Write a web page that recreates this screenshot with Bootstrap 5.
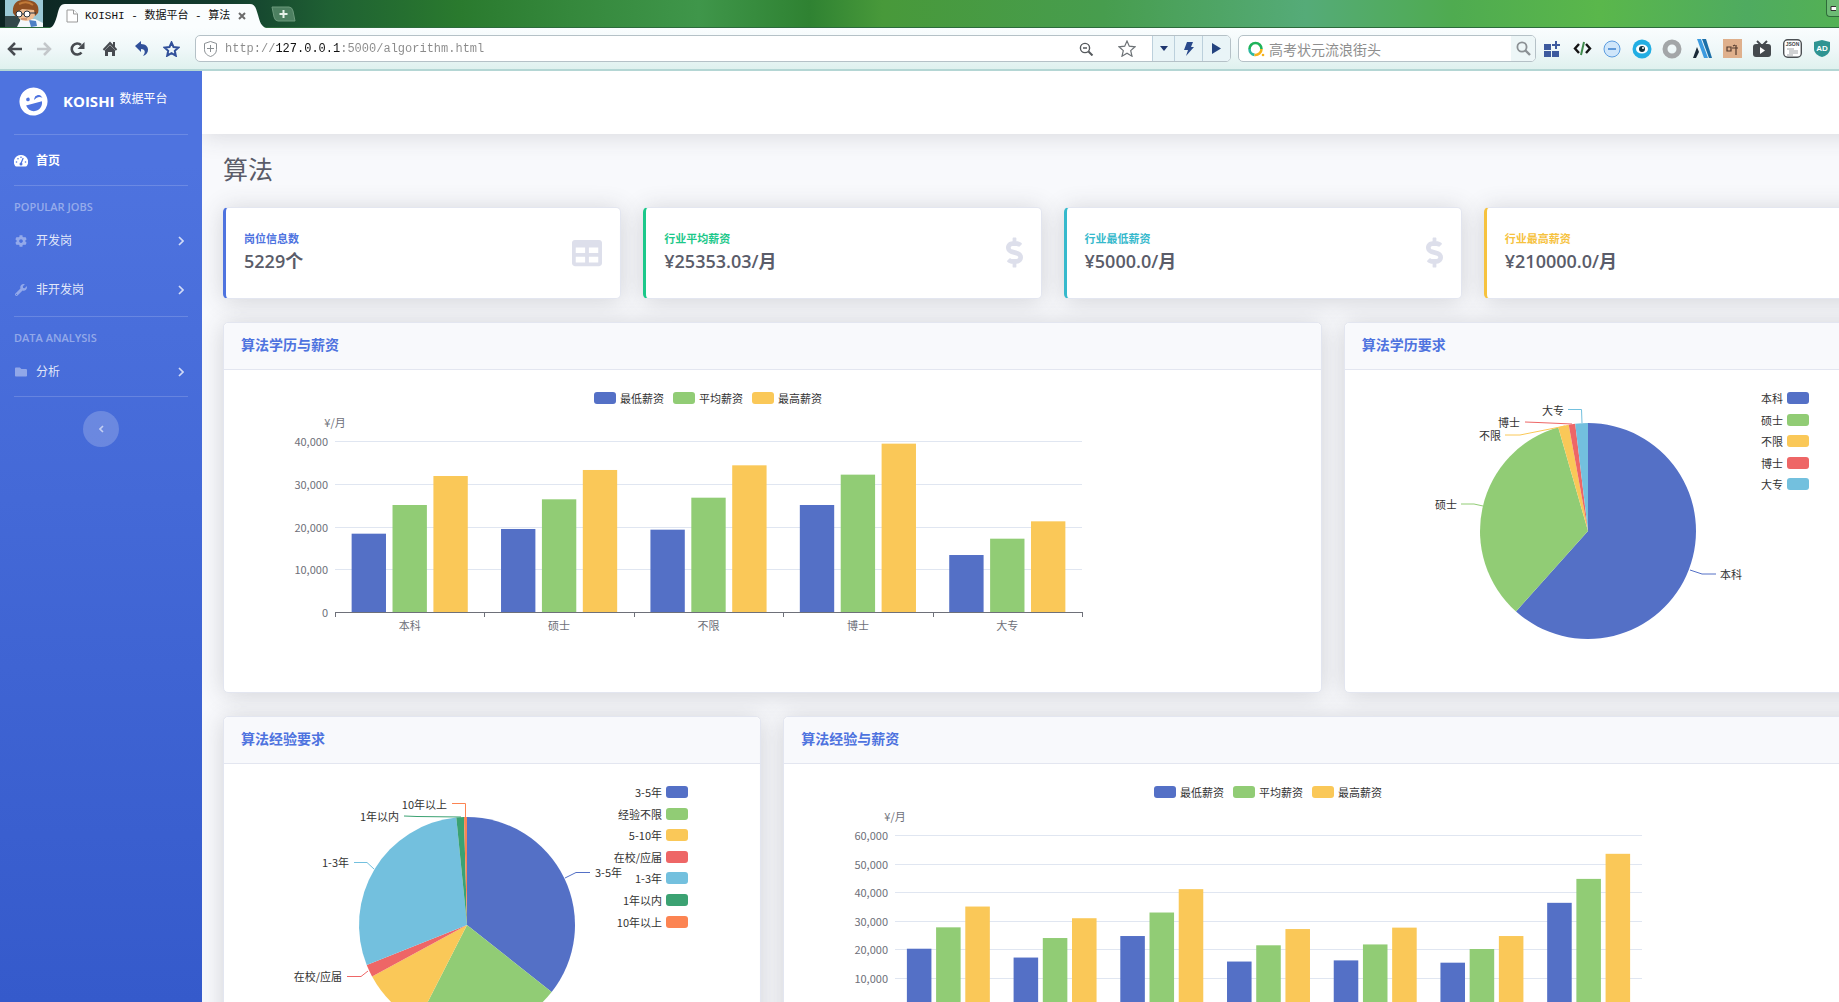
<!DOCTYPE html>
<html lang="zh-CN">
<head>
<meta charset="utf-8">
<meta name="viewport" content="width=device-width, initial-scale=1">
<title>KOISHI - 数据平台 - 算法</title>
<link href="https://cdn.jsdelivr.net/npm/bootstrap@5.3.0/dist/css/bootstrap.min.css" rel="stylesheet">
<style>
:root{--ink:#5a5c69;--brand:#4e73df}
html,body{height:100%}
body{font-family:"Open Sans","Noto Sans CJK SC",sans-serif;font-size:12px;line-height:20px;color:var(--ink);overflow:hidden;display:flex;flex-direction:column;background:#f8f9fc}
svg{display:block;flex:none}
button{border:0;background:none;padding:0}

/* browser frame */
.tabstrip{height:28px;flex:none;border-bottom:1px solid #2c6b3c;background:linear-gradient(90deg,#0c2322 0,#123c2e 12%,#1f6133 18%,#2a7a2e 25%,#35883c 31%,#3f964a 38%,#2f8232 44%,#48993a 48%,#479d4e 60%,#55ab78 71%,#4fab50 79%,#5ab74b 87%,#4fab60 95%,#53b154 100%)}
.avatar{width:38px;margin-left:5px}
.tab-wrap{position:relative;width:216px;height:28px;margin-left:7px}
.tab-wrap .tab-shape{position:absolute;inset:0}
.tab-line{position:relative;height:28px;padding:4px 20px 0 16px;gap:7px;color:#111;font:11px/20px "Liberation Mono","Noto Sans CJK SC",monospace}
.tabstrip .min-btn{width:13px;height:17px;border:1px solid #2f6b3a;border-width:0 0 1px 1px;border-radius:0 0 0 4px;background:#6dbb74}
.toolbar{height:43px;flex:none;background:linear-gradient(#fafdfe,#eef7f8 55%,#dff1ee);border-bottom:2px solid #b4d6d4}
.tb-btn{height:28px;display:flex;align-items:center;justify-content:center;color:#474b50}
.w-a .tb-btn{width:29px}.w-b .tb-btn{width:33px}.w-c .tb-btn,.w-ext .tb-btn{width:30px}
.w-b{margin-left:2px}.w-ext{margin-left:1px;margin-right:2px}
.addr,.find{height:27px;border:1px solid #b5c1c7;border-radius:5px;background:#fff;overflow:hidden}
.addr{margin-left:9px}
.addr input,.find input{border:0;outline:0;background:none;min-width:0;padding:0}
.addr input{font:12px/24px "Liberation Mono",monospace;color:transparent;background:linear-gradient(90deg,#8a8a8a 7ch,#111 7ch,#111 16ch,#8a8a8a 16ch);background-clip:text;-webkit-background-clip:text}
.addr .seg{width:28px;height:26px;border-left:1px solid #bcd0dc;background:#e9f4f7}
.addr .seg.narrow{width:22px}
.find{width:298px;margin-left:7px;padding-left:8px}
.find input{font-family:"Noto Sans CJK SC",sans-serif;font-size:14px}
.find input::placeholder{color:#8e8e8e;opacity:1}
.find .tb-btn{width:24px;background:#edf6f7}

/* dashboard */
.side{width:202px;flex:none;background:linear-gradient(180deg,#4e73df 10%,#355acb 100%);color:#fff}
.side .brand-row{height:63px;padding:0 19px;gap:15px;color:#fff;font-size:15px;font-weight:700;text-decoration:none}
.side .brand-row span{padding-bottom:3px}
.side .brand-row svg{margin-bottom:2px}
.side .brand-row sup{font-size:12px;font-weight:400;top:-4px;margin-left:1px}
.side .rule{height:1px;margin:0 14px;background:rgba(255,255,255,.17)}
.side .rule-gap{margin-top:2px}
.side .side-head{padding:13px 14px 1px;font-size:11px;line-height:16px;font-weight:600;color:rgba(255,255,255,.42)}
.side .item{height:49px;padding:1px 18px 0 14px;gap:8px;color:rgba(255,255,255,.85);text-decoration:none}
.side .item svg:first-child{opacity:.4}
.side .item.now{height:50px;color:#fff;font-weight:700}
.side .item.now svg:first-child{opacity:1}
.side .item svg:last-child:not(:first-child){margin-left:auto}
.side .fold{width:36px;height:36px;margin:14px auto;border-radius:50%;background:rgba(255,255,255,.2);color:rgba(255,255,255,.6)}
.main{min-width:0;overflow:hidden}
.wide{width:calc(100% + 65px)}
.topbar{height:63px;background:#fff;position:relative;box-shadow:0 2px 25px rgba(58,59,69,.17)}
.page{padding:20px 22px 0 21px}
.page h1{font-size:25px;line-height:30px;font-weight:400;margin-bottom:23px}
.page .row{--bs-gutter-x:22px}
.panel{background:#fff;border:1px solid #e3e6f0;border-radius:5px;box-shadow:0 2px 25px rgba(58,59,69,.2);margin-bottom:23px}
.stat{height:92px;padding:0 18px 1px 18px;border-left:3px solid var(--c)}
.stat .lab{font-size:11px;line-height:14px;font-weight:700;color:var(--c);margin-bottom:4px}
.stat .num{font-size:18px;line-height:23px;font-weight:600}
.stat svg{fill:#dddfeb}
.panel .head{height:47px;padding:0 17px 2px;background:#f8f9fc;border-bottom:1px solid #e3e6f0;border-radius:5px 5px 0 0}
.panel h2{font-size:14px;font-weight:700;color:var(--brand);margin:0}
.panel .plot{height:322px;padding:17px 18px;overflow:hidden}
.plot text{font-family:"Noto Sans CJK SC",sans-serif;font-size:11px;fill:#333;dominant-baseline:central}
.plot .axis text{fill:#6e7079}
</style>
<script src="https://cdn.jsdelivr.net/npm/bootstrap@5.3.0/dist/js/bootstrap.bundle.min.js"></script>
</head>
<body>
<header class="flex-shrink-0">
  <div class="tabstrip d-flex">
    <svg class="avatar" height="27" viewBox="0 0 38 27"><rect width="38" height="27" fill="#9cc9d6"/><path d="M0 16h15v11H0z" fill="#33484a"/><path d="M12 27l4-8h14l8 4v4z" fill="#f3f7fa"/><path d="M24 20l7 1 1 5-6 1z" fill="#4d7fc4"/><ellipse cx="21" cy="12" rx="10" ry="9" fill="#eebd93"/><path d="M8 13C7 3 13-1 21 0c9 0 14 5 12 13l-3 3-1-6-12-1-5 4-1 4z" fill="#8f4f22"/><path d="M14 4q8-4 14 1" stroke="#c27a38" stroke-width="2" fill="none"/><circle cx="14" cy="14" r="3" fill="#fff" stroke="#29333c"/><circle cx="22" cy="14" r="3" fill="#fff" stroke="#29333c"/><path d="M17 14h2m6-1h6" stroke="#29333c"/><path d="M16 19h6" stroke="#b0694a"/></svg>
    <div class="tab-wrap">
      <svg class="tab-shape" width="216" height="28" viewBox="0 0 216 28"><path d="M0 28c4-2 5-6 7-12 2-8 3-12 8-12h185c5 0 6 4 8 11 2 7 3 11 8 13z" fill="#fafdfe"/></svg>
      <div class="tab-line d-flex align-items-center">
        <svg width="12" height="14" viewBox="0 0 12 14" fill="#fff" stroke="#999"><path d="M1 1h6.500l4 4v8H1z"/><path d="M7.500 1v4h4"/></svg>
        <span>KOISHI - 数据平台 - 算法</span>
        <button class="ms-auto" aria-label="关闭标签"><svg width="8" height="8" viewBox="0 0 8 8" stroke="#6b6b6b" stroke-width="2"><path d="M1 1l6 6M7 1L1 7"/></svg></button>
      </div>
    </div>
    <button class="ms-1" aria-label="新标签"><svg width="26" height="16" viewBox="0 0 26 16"><path d="M2 1h17q3 0 4 4l2 10H8q-3 0-4-4z" fill="#4d8061" stroke="#6c9a7c"/><path d="M13.500 4v8M9.500 8h8" stroke="#e6f0e8" stroke-width="2"/></svg></button>
    <button class="min-btn ms-auto d-flex align-items-center" aria-label="最小化"><svg width="9" height="5" viewBox="0 0 9 5"><path d="M4 .5h8v4H4z" fill="#fff" stroke="#333"/></svg></button>
  </div>
  <div class="toolbar d-flex align-items-center">
    <div class="d-flex w-a">
      <button class="tb-btn" aria-label="后退"><svg width="16" height="14" viewBox="0 0 16 14" fill="none" stroke="currentColor" stroke-width="2.500"><path d="M8 1L2 7l6 6M2 7h13"/></svg></button>
      <button class="tb-btn" aria-label="前进"><svg width="16" height="14" viewBox="0 0 16 14" fill="none" stroke="#c3c7ca" stroke-width="2.500"><path d="M8 1l6 6-6 6M14 7H1"/></svg></button>
    </div>
    <div class="d-flex w-b">
      <button class="tb-btn" aria-label="刷新"><svg width="16" height="16" viewBox="0 0 16 16"><path d="M12.500 11.500A5.500 5.500 0 1 1 12 4" fill="none" stroke="currentColor" stroke-width="2.600"/><path d="M15.500 1v7h-7z" fill="currentColor"/></svg></button>
      <button class="tb-btn" aria-label="主页"><svg width="16" height="16" viewBox="0 0 16 16" fill="none" stroke="currentColor" stroke-width="2"><path d="M1.500 9L8 2l6.500 7M12 1v5"/><path d="M3 9l5-5 5 5v6h-3v-4H6v4H3z" fill="currentColor" stroke="none"/></svg></button>
    </div>
    <div class="d-flex w-c">
      <button class="tb-btn" aria-label="撤销"><svg width="15" height="15" viewBox="0 0 15 15"><path d="M1 5l6-5v3c9 0 9 10 2 12 3-4 2-7-2-7v3z" fill="#31509a"/></svg></button>
      <button class="tb-btn" aria-label="收藏夹"><svg width="17" height="16" viewBox="0 0 17 16" fill="none" stroke="#31509a" stroke-width="2"><path d="M8.500 1.500l2 4.500 5 .5-3.700 3.300 1 4.900-4.300-2.500-4.300 2.500 1-4.900L1.500 6.500l5-.5z"/></svg></button>
    </div>
    <div class="addr d-flex align-items-center flex-fill">
      <svg class="ms-2" width="13" height="16" viewBox="0 0 13 16" fill="none" stroke="#8a8f93"><path d="M6.500.5l6 2v6c0 4-3 6-6 7-3-1-6-3-6-7v-6z"/><path d="M6.500 4v7M3 7.500h7"/></svg>
      <input class="flex-fill ms-2" aria-label="地址" value="http://127.0.0.1:5000/algorithm.html">
      <button class="tb-btn me-4" aria-label="缩小"><svg width="15" height="14" viewBox="0 0 15 14" fill="none" stroke="#55595d" stroke-width="1.400"><circle cx="6" cy="6" r="4.600"/><path d="M4 6h4"/><path d="M9.500 9.500l4 4" stroke-width="2"/></svg></button>
      <button class="tb-btn me-3" aria-label="加入收藏"><svg width="18" height="17" viewBox="0 0 18 17" fill="none" stroke="#6d7276" stroke-width="1.200"><path d="M9 1l2.300 5.200 5.700.6-4.300 3.800 1.300 5.600L9 13.300l-5 2.900 1.300-5.600L1 6.800l5.700-.6z"/></svg></button>
      <button class="tb-btn seg narrow" aria-label="历史"><svg width="8" height="5" viewBox="0 0 8 5"><path d="M0 0h8L4 5z" fill="#1f3770"/></svg></button>
      <button class="tb-btn seg" aria-label="极速模式"><svg width="10" height="14" viewBox="0 0 10 14"><path d="M3 0h6L7 5h3L2 14l2-6H0z" fill="#2a4a8c"/></svg></button>
      <button class="tb-btn seg" aria-label="转到"><svg width="9" height="11" viewBox="0 0 9 11"><path d="M0 0l9 5.500L0 11z" fill="#24437f"/></svg></button>
    </div>
    <div class="find d-flex align-items-center">
      <svg width="18" height="16" viewBox="0 0 18 16" fill="none" stroke-width="2.600"><path d="M2.500 8A6 6 0 0 1 14.500 8" stroke="#1fb35a"/><path d="M2.500 8a6 6 0 0 0 5 5.900" stroke="#2bb7a2"/><path d="M14.500 8a6 6 0 0 1-7 5.900" stroke="#f5b21b"/><circle cx="16" cy="14" r="1.300" fill="#f5b21b" stroke="none"/></svg>
      <input class="flex-fill ms-1" type="text" aria-label="搜索" placeholder="高考状元流浪街头">
      <button class="tb-btn" aria-label="搜索"><svg width="15" height="15" viewBox="0 0 15 15" fill="none" stroke="#8b9094" stroke-width="1.800"><circle cx="6" cy="6" r="4.600"/><path d="M9.500 9.500l4.500 4.500" stroke-width="2.400"/></svg></button>
    </div>
    <div class="d-flex w-ext">
      <button class="tb-btn" aria-label="扩展"><svg width="18" height="18" viewBox="0 0 18 18" fill="#3d5a9e"><path d="M1 4h7v6H1zM1 11h7v6H1zM9 11h7v6H9zM12 1h2v3h3v2h-3v3h-2V6H9V4h3z"/></svg></button>
      <button class="tb-btn" aria-label="代码"><svg width="19" height="15" viewBox="0 0 19 15" fill="none" stroke-width="2.400"><path d="M6 3L2 7.500 6 12M13 3l4 4.500-4 4.500" stroke="#141414"/><path d="M11 1L8 14" stroke="#3f8a4b" stroke-width="2"/></svg></button>
      <button class="tb-btn" aria-label="折叠"><svg width="18" height="18" viewBox="0 0 18 18"><circle cx="9" cy="9" r="8" fill="#cfe6fa" stroke="#5c9de0"/><path d="M5 9h8" stroke="#3b7fcc" stroke-width="1.500"/></svg></button>
      <button class="tb-btn" aria-label="护眼"><svg width="20" height="20" viewBox="0 0 20 20"><circle cx="10" cy="10" r="9.500" fill="#22aee3"/><ellipse cx="10" cy="10" rx="6" ry="4.500" fill="#fff"/><circle cx="10" cy="10" r="3" fill="#12333f"/><circle cx="11" cy="9" r="1" fill="#fff"/></svg></button>
      <button class="tb-btn" aria-label="圆环"><svg width="20" height="20" viewBox="0 0 20 20"><circle cx="10" cy="10" r="7" fill="none" stroke="#a3a6a8" stroke-width="5"/></svg></button>
      <button class="tb-btn" aria-label="斜线"><svg width="19" height="19" viewBox="0 0 19 19"><path d="M4 0h4l7 19h-4z" fill="#3c9be0"/><path d="M9 0h4l6 19h-3z" fill="#1c6fa8"/><path d="M4 8l2 5-3 6H0z" fill="#1a2a38"/></svg></button>
      <button class="tb-btn" aria-label="脚本"><svg width="19" height="19" viewBox="0 0 19 19"><rect width="19" height="19" fill="#dfb08c"/><path d="M4 8h4v4H4zM9 9h6M13 6v10M10 7l2-1" stroke="#533a2e" fill="none" stroke-width="1.200"/></svg></button>
      <button class="tb-btn" aria-label="视频"><svg width="20" height="18" viewBox="0 0 20 18"><path d="M5 1l4 4M15 1l-4 4" stroke="#454a4e" stroke-width="2"/><rect x="1" y="4" width="18" height="13" rx="3" fill="#454a4e"/><path d="M8 7l5 3.500L8 14z" fill="#fff"/></svg></button>
      <button class="tb-btn" aria-label="JSON"><svg width="19" height="19" viewBox="0 0 19 19"><rect x=".7" y=".7" width="17.600" height="17.600" rx="4" fill="#fff" stroke="#4c5054" stroke-width="1.400"/><text x="9.500" y="7" font-size="5" font-weight="700" text-anchor="middle" fill="#444" font-family="Liberation Sans">JSON</text><path d="M4 10h7M6 12h9M6 14h9M4 16h6" stroke="#a2a5a8"/></svg></button>
      <button class="tb-btn" aria-label="广告拦截"><svg width="16" height="17" viewBox="0 0 16 17"><path d="M8 0l8 2v7c0 4-4 7-8 8-4-1-8-4-8-8V2z" fill="#2f9492"/><text x="8" y="11" font-size="8" font-weight="700" text-anchor="middle" fill="#fff" font-family="Liberation Sans">AD</text></svg></button>
    </div>
  </div>
</header>

<div class="d-flex flex-fill overflow-hidden">
  <nav class="side" aria-label="侧边栏">
    <a class="brand-row d-flex align-items-center" href="#">
      <svg width="29" height="29" viewBox="0 0 30 30"><g transform="rotate(-15 15 15)"><circle cx="15" cy="15" r="14.500" fill="#fff"/><circle cx="10" cy="11.500" r="1.900" fill="#4e73df"/><path d="M17 12.500c1-3 6-3 7 0-2-1.300-5-1.300-7 0z" fill="#4e73df" stroke="#4e73df"/><path d="M6.500 17h17c-.6 4.700-4 8-8.500 8s-7.900-3.300-8.500-8z" fill="#4e73df"/></g></svg>
      <span>KOISHI <sup>数据平台</sup></span>
    </a>
    <div class="rule"></div>
    <a class="item now d-flex align-items-center" href="#"><svg width="14" height="12" viewBox="0 0 14 12"><path d="M7 0a7 7 0 0 1 6 10.800q-.4.700-1.200.7H2.200q-.8 0-1.200-.7A7 7 0 0 1 7 0z" fill="#fff"/><path d="M9.200 3L7 8.500" stroke="#4e73df" stroke-width="1.200"/><circle cx="7" cy="9" r="1.500" fill="#4e73df"/><g fill="#4e73df"><circle cx="2.500" cy="7" r=".8"/><circle cx="4" cy="3.800" r=".8"/><circle cx="7" cy="2.200" r=".8"/><circle cx="11.500" cy="7" r=".8"/></g></svg>首页</a>
    <div class="rule"></div>
    <div class="side-head">POPULAR JOBS</div>
    <a class="item d-flex align-items-center" href="#"><svg width="14" height="12" viewBox="0 0 512 512" fill="#fff"><path d="M487.400 315.700l-42.600-24.600c4.300-23.200 4.300-47 0-70.200l42.600-24.600c4.900-2.800 7.100-8.600 5.500-14-11.100-35.600-30-67.800-54.700-94.600-3.800-4.100-10-5.100-14.800-2.300L380.800 110c-17.900-15.400-38.500-27.300-60.800-35.100V25.800c0-5.600-3.900-10.500-9.400-11.700-36.700-8.200-74.300-7.800-109.200 0-5.500 1.200-9.400 6.100-9.400 11.700V75c-22.200 7.900-42.800 19.800-60.800 35.100L88.700 85.500c-4.900-2.800-11-1.900-14.800 2.300-24.700 26.700-43.600 58.900-54.700 94.600-1.700 5.400.6 11.200 5.500 14L67.300 221c-4.300 23.200-4.300 47 0 70.200l-42.600 24.600c-4.900 2.800-7.100 8.600-5.500 14 11.100 35.600 30 67.800 54.700 94.600 3.800 4.100 10 5.100 14.800 2.300l42.600-24.600c17.900 15.400 38.500 27.300 60.800 35.100v49.200c0 5.600 3.900 10.500 9.400 11.700 36.700 8.200 74.300 7.800 109.200 0 5.500-1.200 9.400-6.100 9.400-11.700v-49.200c22.200-7.900 42.800-19.800 60.800-35.100l42.600 24.600c4.900 2.800 11 1.900 14.800-2.300 24.700-26.700 43.600-58.900 54.700-94.600 1.500-5.500-.7-11.300-5.600-14.100zM256 336c-44.100 0-80-35.900-80-80s35.900-80 80-80 80 35.900 80 80-35.900 80-80 80z"/></svg>开发岗<svg width="6" height="10" viewBox="0 0 6 10" fill="none" stroke="#fff" stroke-opacity=".75" stroke-width="1.700"><path d="M1 1l4 4-4 4"/></svg></a>
    <a class="item d-flex align-items-center" href="#"><svg width="14" height="12" viewBox="0 0 512 512" fill="#fff"><path d="M507.730 109.100c-2.240-9.030-13.540-12.090-20.120-5.510l-74.360 74.360-67.880-11.310-11.310-67.880 74.360-74.360c6.620-6.620 3.430-17.900-5.660-20.160-47.380-11.740-99.550.91-136.580 37.930-39.640 39.640-50.550 97.100-34.050 147.200L18.740 402.760c-24.990 24.990-24.990 65.510 0 90.500 24.990 24.990 65.510 24.990 90.500 0l213.210-213.210c50.120 16.710 107.470 5.680 147.370-34.220 37.070-37.070 49.700-89.320 37.910-136.730zM64 472c-13.250 0-24-10.750-24-24 0-13.260 10.750-24 24-24s24 10.740 24 24c0 13.250-10.750 24-24 24z"/></svg>非开发岗<svg width="6" height="10" viewBox="0 0 6 10" fill="none" stroke="#fff" stroke-opacity=".75" stroke-width="1.700"><path d="M1 1l4 4-4 4"/></svg></a>
    <div class="rule rule-gap"></div>
    <div class="side-head">DATA ANALYSIS</div>
    <a class="item d-flex align-items-center" href="#"><svg width="14" height="12" viewBox="0 0 512 512" fill="#fff"><path d="M464 128H272l-64-64H48C21.490 64 0 85.490 0 112v288c0 26.510 21.490 48 48 48h416c26.510 0 48-21.490 48-48V176c0-26.510-21.490-48-48-48z"/></svg>分析<svg width="6" height="10" viewBox="0 0 6 10" fill="none" stroke="#fff" stroke-opacity=".75" stroke-width="1.700"><path d="M1 1l4 4-4 4"/></svg></a>
    <div class="rule"></div>
    <button class="fold d-flex align-items-center justify-content-center" aria-label="收起侧边栏"><svg width="5" height="8" viewBox="0 0 5 8" fill="none" stroke="currentColor" stroke-width="1.600"><path d="M4 1L1 4l3 3"/></svg></button>
  </nav>

  <main class="main flex-fill">
    <div class="wide">
      <div class="topbar"></div>
      <div class="page">
        <h1>算法</h1>
        <div class="row">
          <div class="col-3"><div class="panel stat d-flex align-items-center justify-content-between" style="--c:#4e73df"><div><div class="lab">岗位信息数</div><div class="num">5229个</div></div><svg width="30" height="30" viewBox="0 0 512 512"><path d="M464 32H48C21.490 32 0 53.490 0 80v352c0 26.510 21.490 48 48 48h416c26.510 0 48-21.490 48-48V80c0-26.510-21.490-48-48-48zM224 416H64v-96h160v96zm0-160H64v-96h160v96zm224 160H288v-96h160v96zm0-160H288v-96h160v96z"/></svg></div></div>
          <div class="col-3"><div class="panel stat d-flex align-items-center justify-content-between" style="--c:#1cc88a"><div><div class="lab">行业平均薪资</div><div class="num">¥25353.03/月</div></div><svg width="17" height="31" viewBox="0 0 288 512"><use href="#dollar"/></svg></div></div>
          <div class="col-3"><div class="panel stat d-flex align-items-center justify-content-between" style="--c:#36b9cc"><div><div class="lab">行业最低薪资</div><div class="num">¥5000.0/月</div></div><svg width="17" height="31" viewBox="0 0 288 512"><path id="dollar" d="M209.200 233.400l-108-31.600C88.700 198.200 80 186.500 80 173.500c0-16.300 13.200-29.500 29.500-29.500h66.300c12.200 0 24.200 3.700 34.200 10.500 6.100 4.100 14.300 3.100 19.500-2l34.800-34c7.100-6.900 6.100-18.400-1.800-24.500C238 74.800 207.400 64.100 176 64V16c0-8.800-7.200-16-16-16h-32c-8.800 0-16 7.200-16 16v48h-2.500C45.800 64-5.400 118.700.5 183.600c4.200 46.100 39.400 83.600 83.800 96.600l102.500 30c12.500 3.700 21.200 15.300 21.200 28.300 0 16.300-13.200 29.500-29.500 29.500h-66.300C100 368 88 364.300 78 357.500c-6.100-4.100-14.300-3.100-19.500 2l-34.800 34c-7.100 6.900-6.100 18.400 1.800 24.500 24.500 19.200 55.100 29.900 86.500 30v48c0 8.800 7.200 16 16 16h32c8.800 0 16-7.200 16-16v-48.200c46.600-.9 90.300-28.600 105.700-72.700 21.500-61.600-14.600-124.800-72.500-141.700z"/></svg></div></div>
          <div class="col-3"><div class="panel stat d-flex align-items-center justify-content-between" style="--c:#f6c23e"><div><div class="lab">行业最高薪资</div><div class="num">¥210000.0/月</div></div><svg width="17" height="31" viewBox="0 0 288 512"><use href="#dollar"/></svg></div></div>
        </div>
        <div class="row">
          <div class="col-8"><section class="panel"><div class="head d-flex align-items-center"><h2>算法学历与薪资</h2></div><div class="plot" id="eduPay"></div></section></div>
          <div class="col-4"><section class="panel"><div class="head d-flex align-items-center"><h2>算法学历要求</h2></div><div class="plot" id="eduNeed"></div></section></div>
        </div>
        <div class="row">
          <div class="col-4"><section class="panel"><div class="head d-flex align-items-center"><h2>算法经验要求</h2></div><div class="plot" id="expNeed"></div></section></div>
          <div class="col-8"><section class="panel"><div class="head d-flex align-items-center"><h2>算法经验与薪资</h2></div><div class="plot" id="expPay"></div></section></div>
        </div>
      </div>
    </div>
  </main>
</div>

<script>
const COLORS = ['#5470c6', '#91cc75', '#fac858', '#ee6666', '#73c0de', '#3ba272', '#fc8452'];
const open = w => `<svg width="${w}" height="280" viewBox="0 0 ${w} 280">`;
const text = (x, y, s, anchor) => `<text x="${x}" y="${y}" text-anchor="${anchor}">${s}</text>`;
const swatch = (x, y, c) => `<rect x="${x}" y="${y - 6}" width="22" height="12" rx="3" fill="${c}"/>`;

// Grouped bars: lowest, average and highest pay for each category.
function bars(id, max, cats, data) {
  const left = 93, base = 225, tall = 171, width = 747, band = width / data.length;
  const bar = band * 0.23, step = bar * 1.19, pad = (band - bar - 2 * step) / 2;
  let s = open(934);
  ['最低薪资', '平均薪资', '最高薪资'].forEach((n, i) => {
    s += swatch(352 + i * 79, 11, COLORS[i]) + text(378 + i * 79, 11, n, 'start');
  });
  s += '<g class="axis">' + text(left, 35, '¥/月', 'middle');
  for (let v = cats.length ? 0 : 10000; v <= max; v += 10000) {
    const y = Math.round(base - v / max * tall);
    if (v) s += `<path d="M${left} ${y + .5}h${width}" stroke="#e0e6f1"/>`;
    s += text(left - 7, y, v.toLocaleString('en-US'), 'end');
  }
  cats.forEach((n, i) => { s += text(left + (i + .5) * band, base + 13, n, 'middle'); });
  s += '</g>';
  data.forEach((row, i) => row.forEach((v, k) => {
    const h = v / max * tall;
    s += `<rect x="${left + i * band + pad + k * step}" y="${base - h}" width="${bar}" height="${h}" fill="${COLORS[k]}"/>`;
  }));
  s += `<path d="M${left} ${base + .5}h${width}" stroke="#6e7079"/>`;
  for (let i = 0; i <= data.length; i++) s += `<path d="M${Math.round(left + i * band) + .5} ${base}v5" stroke="#6e7079"/>`;
  document.getElementById(id).innerHTML = s + '</svg>';
}

// Pie: `ends` are the clockwise end angles of the slices in degrees.
function pie(id, names, ends, labels) {
  const cx = 225, cy = 144, r = 108;
  const at = a => [cx + r * Math.sin(a * Math.PI / 180), cy - r * Math.cos(a * Math.PI / 180)];
  let s = open(468), from = 0;
  ends.forEach((to, i) => {
    s += `<path d="M${cx} ${cy}L${at(from)}A${r} ${r} 0 ${to - from > 180 ? 1 : 0} 1 ${at(to)}z" fill="${COLORS[i]}"/>`;
    from = to;
  });
  labels.forEach(([i, x, y, anchor, line]) => {
    s += `<path d="M${line}" fill="none" stroke="${COLORS[i]}"/>` + text(x, y, names[i], anchor);
  });
  names.forEach((n, i) => {
    const y = Math.round(11 + i * 21.6);
    s += swatch(424, y, COLORS[i]) + text(420, y, n, 'end');
  });
  document.getElementById(id).innerHTML = s + '</svg>';
}

bars('eduPay', 40000, ['本科', '硕士', '不限', '博士', '大专'],
  [[18320, 25030, 31810], [19420, 26360, 33220], [19260, 26740, 34310], [25030, 32130, 39380], [13330, 17150, 21210]]);
bars('expPay', 60000, [],
  [[20100, 27600, 34900], [17000, 23850, 30800], [24550, 32800, 41000], [15600, 21300, 27000], [16000, 21600, 27500], [15200, 20000, 24550], [36200, 44600, 53400]]);
pie('eduNeed', ['本科', '硕士', '不限', '博士', '大专'], [221.8, 344, 349.7, 353.2, 360], [
  [0, 357, 187, 'start', '327 183L339 187H353'],
  [1, 94, 117, 'end', '98 117H111L120 119'],
  [2, 138, 48, 'end', '142 48H157L202 39'],
  [3, 157, 35, 'end', '162 35L175 35.500L209 37'],
  [4, 201, 23, 'end', '205 22.500H218.500L219 36']]);
pie('expNeed', ['3-5年', '经验不限', '5-10年', '在校/应届', '1-3年', '1年以内', '10年以上'],
  [128.4, 207, 241.5, 248.2, 354.3, 358.4, 360], [
  [0, 353, 91, 'start', '323 97L334 91.500H348'],
  [3, 100, 195, 'end', '105 195.500H119L126 190'],
  [4, 107, 81, 'end', '112 81.500H125L132 88'],
  [5, 157, 35, 'end', '162 35L175 35.500L219 36'],
  [6, 205, 23, 'end', '210 22.500H223.500V36']]);
</script>
</body>
</html>
